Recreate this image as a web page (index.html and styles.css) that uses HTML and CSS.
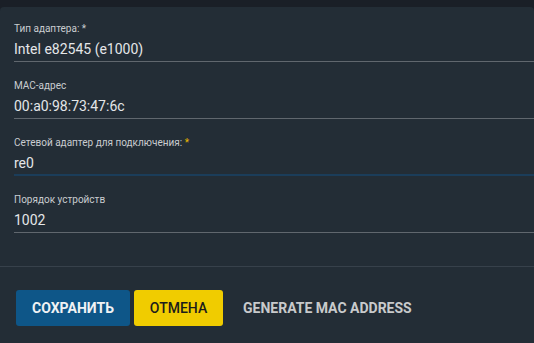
FILE: index.html
```html
<!DOCTYPE html>
<html lang="ru">
<head>
<meta charset="UTF-8" />
<meta name="viewport" content="width=device-width, initial-scale=1" />
<title>Сетевой адаптер</title>
<link rel="stylesheet" href="styles.css">
</head>
<body>

<div class="topbar"></div>

<div class="panel">
  <form class="fields">
    <div class="field">
      <label>Тип адаптера: <span class="req">*</span></label>
      <div class="value">Intel e82545 (e1000)</div>
    </div>
    <div class="field">
      <label>MAC-адрес</label>
      <div class="value">00:a0:98:73:47:6c</div>
    </div>
    <div class="field focused">
      <label>Сетевой адаптер для подключения: <span class="req yellow">*</span></label>
      <div class="value">re0</div>
    </div>
    <div class="field">
      <label>Порядок устройств</label>
      <div class="value">1002</div>
    </div>
  </form>

  <div class="actions">
    <button class="btn save">Сохранить</button>
    <button class="btn cancel">Отмена</button>
    <button class="btn flat">Generate MAC address</button>
  </div>
</div>

</body>
</html>
```

FILE: styles.css
```css
body {
  margin: 0;
  padding: 0;
  background: #1a1f27;
  font-family: Roboto, "Liberation Sans", sans-serif;
  color: #e2e4e6;
  overflow: hidden;
}
.topbar {
  height: 7px;
  background: #1a1f27;
}
.panel {
  background: #232d36;
  border-radius: 4px 4px 0 0;
  height: 336px;
}
.fields {
  padding: 15px 0 0 14px;
  display: flex;
  flex-direction: column;
  gap: 17px;
}
.field {
  border-bottom: 1px solid #60676e;
  padding-bottom: 2px;
}
.field.focused {
  border-bottom: 2px solid #1b3d5a;
  padding-bottom: 1px;
}
.field label {
  display: block;
  font-size: 10px;
  line-height: 14px;
  color: #c9ccd0;
  margin-bottom: 3px;
}
.req.yellow {
  color: #e9b800;
}
.value {
  font-size: 14px;
  line-height: 20px;
  color: #e4e6e8;
}
.actions {
  margin-top: 33px;
  border-top: 1px solid #37414b;
  padding: 23px 16px 0;
  display: flex;
  gap: 4px;
}
.btn {
  height: 36px;
  border: none;
  border-radius: 3px;
  font-family: Roboto, "Liberation Sans", sans-serif;
  font-size: 14px;
  font-weight: 700;
  text-transform: uppercase;
  padding: 0 16px;
  cursor: pointer;
}
.btn.save {
  background: #0e5688;
  color: #f0f2f4;
  width: 114px;
  padding: 0;
}
.btn.cancel {
  background: #f0cc00;
  color: #1c1c1c;
  font-weight: 500;
  width: 89px;
  padding: 0;
}
.btn.flat {
  background: none;
  color: #c8cacc;
}
```
